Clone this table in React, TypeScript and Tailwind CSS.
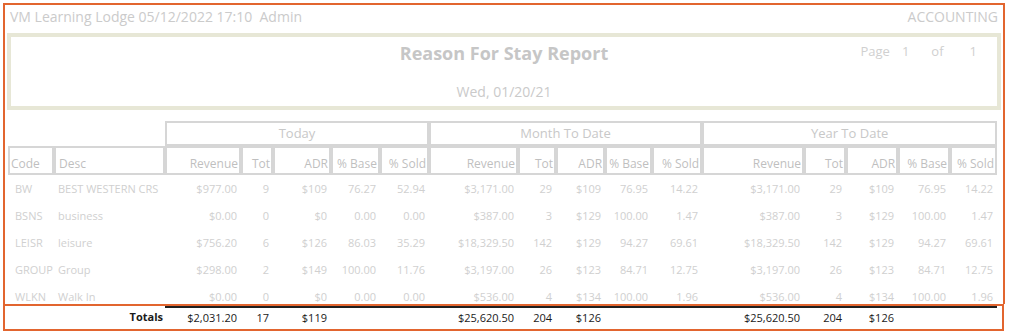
const COLS = [46, 111, 76, 32, 58, 49, 49, 89, 38, 49, 47, 50, 102, 42, 52, 52, 47];
const SUBS = ["Revenue", "Tot", "ADR", "% Base", "% Sold"];

const rows: string[][] = [
    ["BW", "BEST WESTERN CRS", "$977.00", "9", "$109", "76.27", "52.94", "$3,171.00", "29", "$109", "76.95", "14.22", "$3,171.00", "29", "$109", "76.95", "14.22"],
    ["BSNS", "business", "$0.00", "0", "$0", "0.00", "0.00", "$387.00", "3", "$129", "100.00", "1.47", "$387.00", "3", "$129", "100.00", "1.47"],
    ["LEISR", "leisure", "$756.20", "6", "$126", "86.03", "35.29", "$18,329.50", "142", "$129", "94.27", "69.61", "$18,329.50", "142", "$129", "94.27", "69.61"],
    ["GROUP", "Group", "$298.00", "2", "$149", "100.00", "11.76", "$3,197.00", "26", "$123", "84.71", "12.75", "$3,197.00", "26", "$123", "84.71", "12.75"],
    ["WLKN", "Walk In", "$0.00", "0", "$0", "0.00", "0.00", "$536.00", "4", "$134", "100.00", "1.96", "$536.00", "4", "$134", "100.00", "1.96"],
];

const totals = ["$2,031.20", "17", "$119", "", "", "$25,620.50", "204", "$126", "", "", "$25,620.50", "204", "$126", "", ""];

const Cols = () => (
    <colgroup>
        {COLS.map((w, i) => (
            <col key={i} style={{ width: w }} />
        ))}
    </colgroup>
);

const App = () => {
    return (
        <div className="w-[1010px] h-[335px] bg-white pt-[3px] pl-[3px] text-[#c8c8c8]" style={{ fontFamily: '"Open Sans", sans-serif' }}>
            {/* report body */}
            <div className="w-[1002px] h-[301px] border-2 border-b-0 border-[#e2652f]">
                <div className="flex items-start justify-between h-[28px] pt-[1px] pl-[5px] pr-[5px] text-[14px] text-[#cbcbcb]">
                    <span className="whitespace-pre">VM Learning Lodge 05/12/2022 17:10  Admin</span>
                    <span>ACCOUNTING</span>
                </div>

                {/* title box */}
                <div className="relative ml-[2px] w-[994px] h-[77px] border-[4px] border-[#e7e7d6]">
                    <div className="pt-[3px] text-center text-[18px] font-bold text-[#c6c6c6]">Reason For Stay Report</div>
                    <div className="pt-[14px] text-center text-[14px] text-[#cacaca]">Wed, 01/20/21</div>
                    <div className="absolute top-[5px] right-[20px] flex text-[13px] text-[#d0d0d0]">
                        <span>Page</span>
                        <span className="ml-[12px]">1</span>
                        <span className="ml-[22px]">of</span>
                        <span className="ml-[26px]">1</span>
                    </div>
                </div>

                {/* table */}
                <table className="ml-[3px] mt-[11px] table-fixed border-separate border-spacing-0 w-[989px]">
                    <Cols />
                    <thead>
                        <tr className="h-[24px]">
                            <th colSpan={2} />
                            {["Today", "Month To Date", "Year To Date"].map((g) => (
                                <th
                                    key={g}
                                    colSpan={5}
                                    className="border-2 border-[#d6d6d6] text-[13px] font-normal text-[#c8c8c8] text-center pt-[1px]"
                                >
                                    {g}
                                </th>
                            ))}
                        </tr>
                        <tr className="h-[27px]">
                            <th className="border-2 border-[#d6d6d6] text-left font-normal text-[12px] text-[#bfbfbf] pl-[1px] pt-[7px]">Code</th>
                            <th className="border-2 border-[#d6d6d6] text-left font-normal text-[12px] text-[#bfbfbf] pl-[3px] pt-[7px]">Desc</th>
                            {[0, 1, 2].flatMap((g) =>
                                SUBS.map((s) => (
                                    <th
                                        key={g + s}
                                        className="border-2 border-[#d6d6d6] text-right font-normal text-[12px] text-[#bfbfbf] pr-[1px] pt-[7px] whitespace-nowrap"
                                    >
                                        {s}
                                    </th>
                                ))
                            )}
                        </tr>
                    </thead>
                    <tbody className="text-[11px] leading-[12px] text-[#d0d0d0]">
                        {rows.map((r, ri) => (
                            <tr key={ri} className="h-[27px]">
                                {r.map((c, ci) => (
                                    <td
                                        key={ci}
                                        className={
                                            ci === 0
                                                ? "align-top pl-[7px] pt-[8px] whitespace-nowrap"
                                                : ci === 1
                                                ? "align-top pl-[4px] pt-[8px] whitespace-nowrap"
                                                : "align-top text-right pr-[4px] pt-[8px] whitespace-nowrap"
                                        }
                                    >
                                        {c}
                                    </td>
                                ))}
                            </tr>
                        ))}
                    </tbody>
                </table>
            </div>

            {/* totals strip */}
            <div className="w-[1001px] h-[27px] border-2 border-[#e2652f]">
                <table className="ml-[3px] table-fixed border-separate border-spacing-0 w-[989px]">
                    <Cols />
                    <tbody>
                        <tr className="h-[23px] text-[11px] text-[#1a1a1a]">
                            <td colSpan={2} className="text-right font-bold pr-[2px]">Totals</td>
                            {totals.map((t, i) => (
                                <td key={i} className="border-t-2 border-[#1f1f1f] text-right pr-[4px] whitespace-nowrap">
                                    {t}
                                </td>
                            ))}
                        </tr>
                    </tbody>
                </table>
            </div>
        </div>
    );
};

export default App;
